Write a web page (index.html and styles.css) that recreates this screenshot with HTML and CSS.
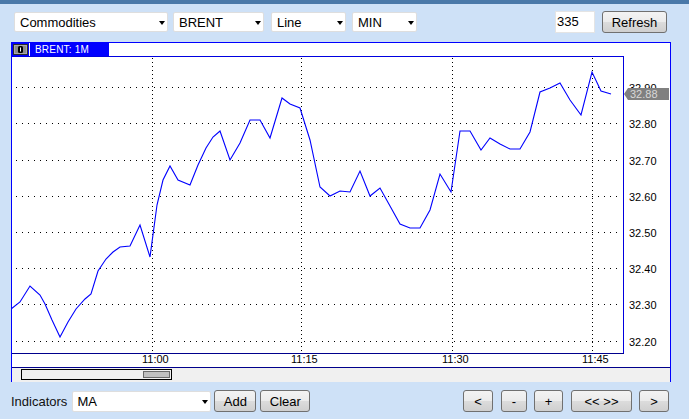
FILE: index.html
```html
<!DOCTYPE html>
<html>
<head>
<meta charset="utf-8">
<link rel="stylesheet" href="styles.css">
</head>
<body>
<div class="topstrip"></div>
<div class="toolbar">
  <div class="select w-comm"><span>Commodities</span><i class="arrow"></i></div>
  <div class="select w-brent"><span>BRENT</span><i class="arrow"></i></div>
  <div class="select w-line"><span>Line</span><i class="arrow"></i></div>
  <div class="select w-min"><span>MIN</span><i class="arrow"></i></div>
  <div class="spacer"></div>
  <div class="numinput">335</div>
  <button class="btn w-refresh">Refresh</button>
</div>
<div class="panel">
  <div class="panel-head">
    <div class="tab">
      <svg class="tab-icon" width="15" height="11" viewBox="0 0 15 11">
        <rect x="0.5" y="0.5" width="14" height="10" fill="#a9a9a9" stroke="#2a2a2a"/>
        <rect x="2" y="2" width="11" height="7" fill="#8a8a8a"/>
        <rect x="5" y="2" width="5" height="7" rx="1.5" fill="#000"/>
        <rect x="7" y="3.5" width="1" height="4" fill="#fff"/>
      </svg>
      <span class="tab-sep"></span>
      <span class="tab-title">BRENT: 1M</span>
    </div>
  </div>
  <svg class="chart" width="658" height="312" viewBox="12 56 658 312">
    <rect x="12" y="56" width="658" height="312" fill="#fff"/>
    <g class="grid-h">
      <line x1="16" y1="87.5" x2="621" y2="87.5"/>
      <line x1="16" y1="123.5" x2="621" y2="123.5"/>
      <line x1="16" y1="160.5" x2="621" y2="160.5"/>
      <line x1="16" y1="196.5" x2="621" y2="196.5"/>
      <line x1="16" y1="232.5" x2="621" y2="232.5"/>
      <line x1="16" y1="268.5" x2="621" y2="268.5"/>
      <line x1="16" y1="304.5" x2="621" y2="304.5"/>
      <line x1="16" y1="341.5" x2="621" y2="341.5"/>
    </g>
    <g class="grid-v">
      <line x1="152.5" y1="58" x2="152.5" y2="352"/>
      <line x1="301.5" y1="58" x2="301.5" y2="352"/>
      <line x1="452.5" y1="58" x2="452.5" y2="352"/>
      <line x1="592.5" y1="58" x2="592.5" y2="352"/>
    </g>
    <line class="frame-top" x1="12" y1="56.5" x2="623" y2="56.5"/>
    <line class="frame-side" x1="623.5" y1="56" x2="623.5" y2="354"/>
    <line class="frame-bottom" x1="12" y1="353.5" x2="624" y2="353.5"/>
    <line class="frame-bottom" x1="12" y1="367.5" x2="670" y2="367.5"/>
    <polyline class="price" points="11,309 20,302 30,286 40,295 45,304 52,320 60,337 68,322 76,309 85,299 91,294 98,271 106,259 113,252 120,247 130,246 140,225 150,257 157,205 163,180 170,166 178,180 190,185 198,165 206,148 213,137 220,131 230,160 240,143 250,120 260,120 270,138 282,98 290,104 300,108 310,140 320,187 330,196 340,191 350,192 360,171 370,196 380,188 390,206 400,224 410,228 420,228 430,210 440,174 451,192 460,131 470,131 481,150 490,138 500,144 510,149 520,149 530,132 540,92 550,88 560,83 570,100 581,115 592,72 601,91 611,94"/>
    <g class="ylabels">
      <text x="629" y="91.5">32.90</text>
      <text x="629" y="127.5">32.80</text>
      <text x="629" y="164.5">32.70</text>
      <text x="629" y="200.5">32.60</text>
      <text x="629" y="236.5">32.50</text>
      <text x="629" y="272.5">32.40</text>
      <text x="629" y="308.5">32.30</text>
      <text x="629" y="345.5">32.20</text>
    </g>
    <polygon class="tag" points="624,94 628,88 669,88 669,100 628,100"/>
    <text class="tagtext" x="630" y="98">32.88</text>
    <g class="xlabels">
      <text x="142" y="363">11:00</text>
      <text x="291" y="363">11:15</text>
      <text x="442" y="363">11:30</text>
      <text x="582" y="363">11:45</text>
    </g>
  </svg>
  <div class="scrollarea">
    <div class="scrollbox"><div class="thumb"></div></div>
  </div>
</div>
<div class="bottombar">
  <span class="label">Indicators</span>
  <div class="select w-ma"><span>MA</span><i class="arrow"></i></div>
  <button class="btn w-add">Add</button>
  <button class="btn w-clear">Clear</button>
  <div class="spacer"></div>
  <button class="btn w-prev">&lt;</button>
  <button class="btn w-minus">-</button>
  <button class="btn w-plus">+</button>
  <button class="btn w-all">&lt;&lt; &gt;&gt;</button>
  <button class="btn w-next">&gt;</button>
</div>
</body>
</html>
```

FILE: styles.css
```css
html, body {
  margin: 0;
  padding: 0;
}
body {
  width: 689px;
  height: 419px;
  overflow: hidden;
  background: #cee1f7;
  font-family: "Liberation Sans", Arial, sans-serif;
  font-size: 13px;
  color: #000;
}
.topstrip {
  height: 4px;
  background: #4a79a9;
}
.toolbar {
  display: flex;
  align-items: center;
  height: 22px;
  margin-top: 7px;
  padding: 0 22px 0 14px;
}
.spacer {
  flex: 1;
}
.select {
  box-sizing: border-box;
  display: flex;
  align-items: center;
  justify-content: space-between;
  height: 20px;
  background: #fff;
  border: 1px solid #dedede;
  border-radius: 2px;
  padding: 0 2px 0 5px;
}
.arrow {
  display: block;
  width: 0;
  height: 0;
  border-left: 3.5px solid transparent;
  border-right: 3.5px solid transparent;
  border-top: 4px solid #000;
  margin-top: 1px;
}
.w-comm { width: 154px; }
.w-brent { width: 91px; margin-left: 5px; }
.w-line { width: 75px; margin-left: 7px; }
.w-min { width: 65px; margin-left: 6px; }
.numinput {
  box-sizing: border-box;
  width: 40px;
  height: 22px;
  background: #fff;
  border: 1px solid #e4e4e4;
  padding-left: 1px;
  line-height: 20px;
}
.btn {
  box-sizing: border-box;
  height: 22px;
  padding: 0;
  border: 1px solid #707070;
  border-radius: 3px;
  background: linear-gradient(#f3f3f3, #ebebeb 50%, #dcdcdc 50%, #cfcfcf);
  font-family: "Liberation Sans", Arial, sans-serif;
  font-size: 13px;
  color: #000;
  text-align: center;
}
.w-refresh { width: 65px; margin-left: 7px; }
.panel {
  width: 658px;
  margin: 9px 0 0 11px;
  border: 1px solid #0000ff;
  border-bottom: 0;
  background: #fff;
}
.panel-head {
  display: flex;
  height: 13px;
  background: #fff;
}
.tab {
  display: flex;
  align-items: center;
  width: 97px;
  height: 13px;
  background: #0000ff;
}
.tab-icon {
  display: block;
  margin-left: 1px;
}
.tab-sep {
  width: 1px;
  height: 13px;
  margin-left: 1px;
  background: #fff;
}
.tab-title {
  margin-left: 5px;
  color: #fff;
  font-size: 10px;
  letter-spacing: 0.2px;
  line-height: 13px;
}
.chart {
  display: block;
}
.grid-h line {
  stroke: #000;
  stroke-width: 1;
  stroke-dasharray: 1 5;
  shape-rendering: crispEdges;
}
.grid-v line {
  stroke: #000;
  stroke-width: 1;
  stroke-dasharray: 1 3;
  shape-rendering: crispEdges;
}
.frame-top, .frame-side {
  stroke: #0000e0;
  stroke-width: 1;
  shape-rendering: crispEdges;
}
.frame-bottom {
  stroke: #00008c;
  stroke-width: 1;
  shape-rendering: crispEdges;
}
.price {
  fill: none;
  stroke: #0000ff;
  stroke-width: 1.1;
  stroke-linejoin: miter;
}
.ylabels text, .xlabels text {
  font-family: "Liberation Sans", Arial, sans-serif;
  font-size: 11px;
  fill: #000;
}
.tag {
  fill: #808080;
}
.tagtext {
  font-family: "Liberation Sans", Arial, sans-serif;
  font-size: 11px;
  fill: #d8d8d8;
}
.scrollarea {
  box-sizing: border-box;
  height: 14px;
  padding: 1px 0 0 9px;
  background: #f0f0f0;
}
.scrollbox {
  box-sizing: border-box;
  display: flex;
  justify-content: flex-end;
  width: 151px;
  height: 11px;
  padding: 1px;
  border: 1px solid #000;
  background: #f0f0f0;
}
.thumb {
  box-sizing: border-box;
  width: 27px;
  height: 7px;
  background: #c0c0c0;
  border: 1px solid #6a6a6a;
}
.bottombar {
  display: flex;
  align-items: flex-end;
  height: 22px;
  margin-top: 8px;
  padding: 0 20px 0 11px;
}
.label {
  line-height: 20px;
  color: #111;
}
.w-ma {
  width: 139px;
  height: 21px;
  margin-left: 5px;
  padding-left: 4px;
}
.w-add { width: 42px; margin-left: 3px; }
.w-clear { width: 50px; margin-left: 4px; }
.w-prev { width: 30px; }
.w-minus { width: 26px; margin-left: 8px; }
.w-plus { width: 29px; margin-left: 7px; }
.w-all { width: 61px; margin-left: 8px; }
.w-next { width: 30px; margin-left: 7px; }
```
